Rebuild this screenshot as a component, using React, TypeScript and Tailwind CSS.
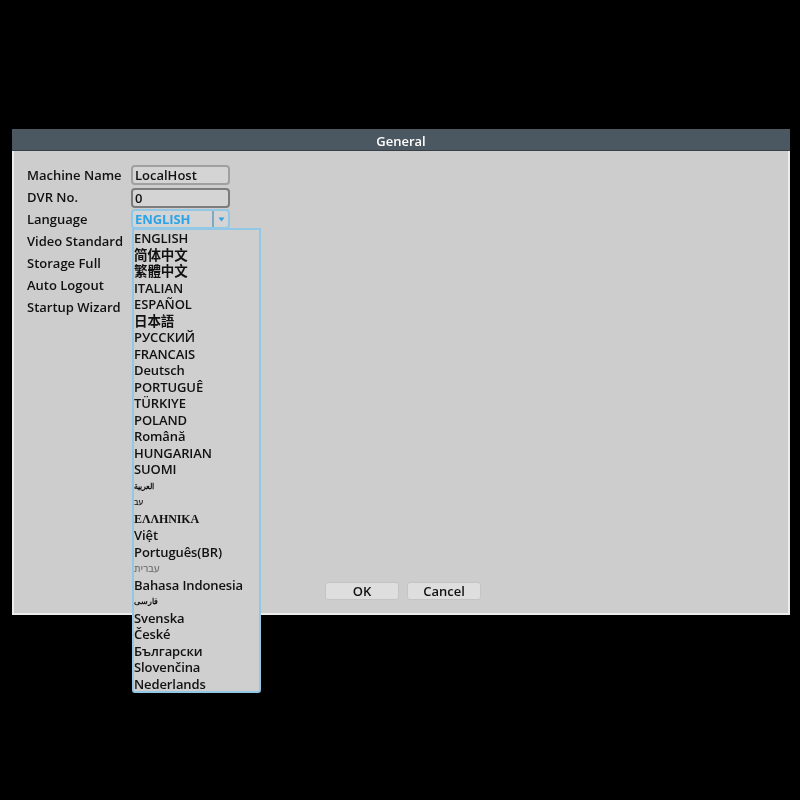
const font = { fontFamily: '"Open Sans", "Noto Sans CJK SC", sans-serif' };

const labels = [
  "Machine Name",
  "DVR No.",
  "Language",
  "Video Standard",
  "Storage Full",
  "Auto Logout",
  "Startup Wizard",
];

const languages: { name: string; cls?: string }[] = [
  { name: "ENGLISH" },
  { name: "简体中文", cls: "text-[13.5px]" },
  { name: "繁體中文", cls: "text-[13.5px]" },
  { name: "ITALIAN" },
  { name: "ESPAÑOL" },
  { name: "日本語", cls: "text-[13.5px]" },
  { name: "РУССКИЙ" },
  { name: "FRANCAIS" },
  { name: "Deutsch" },
  { name: "PORTUGUÊ" },
  { name: "TÜRKIYE" },
  { name: "POLAND" },
  { name: "Română" },
  { name: "HUNGARIAN" },
  { name: "SUOMI" },
  { name: "العربية", cls: "text-[8px]" },
  { name: "עב", cls: "text-[8px]" },
  { name: "ΕΛΛΗΝΙΚΑ", cls: "text-[12px] [font-family:'Liberation_Serif',serif] font-bold" },
  { name: "Việt" },
  { name: "Português(BR)" },
  { name: "עברית", cls: "text-[10px] font-normal text-[#777]" },
  { name: "Bahasa Indonesia" },
  { name: "فارسی", cls: "text-[8px]" },
  { name: "Svenska" },
  { name: "České" },
  { name: "Български" },
  { name: "Slovenčina" },
  { name: "Nederlands" },
];

function LanguageList() {
  return (
    <div className="absolute left-[118px] top-[99px] w-[129px] h-[465px] bg-[#cfcfcf] border-2 border-[#92c8e6] rounded-b-[3px]">
      {languages.map((l) => (
        <div
          key={l.name}
          className={`h-[16.5px] leading-[16.5px] whitespace-nowrap text-[#111] font-semibold tracking-[-0.1px] ${l.cls ?? "text-[13px]"}`}
        >
          {l.name}
        </div>
      ))}
    </div>
  );
}

export default function App() {
  return (
    <div
      className="h-[800px] bg-black pt-[129px] pl-[12px] pr-[10px] blur-[0.4px] antialiased"
      style={font}
    >
      <div className="relative h-[486px] flex flex-col bg-[#cdcdcd] border-b-[2px] border-x-[2px] border-[#ececec]">
        <div className="-mx-[2px] h-[22px] bg-[#4b5761] border-b border-[#36404a] text-center text-white text-[13px] font-semibold leading-[25px]">
          General
        </div>
        <div className="flex-1 flex flex-col pl-[13px] pt-[13px]">
          <div className="flex">
            <div className="w-[104px] flex flex-col">
              {labels.map((label) => (
                <div key={label} className="h-[22px] leading-[22px] text-[13px] font-semibold text-[#111] whitespace-nowrap">
                  {label}
                </div>
              ))}
            </div>
            <div className="w-[99px] flex flex-col pt-[1px]">
              <div className="h-[20px] mb-[3px] rounded-[4px] border-2 border-[#a0a0a0] bg-[#d4d4d4] pl-[2px] leading-[17px] text-[13px] font-semibold text-[#111]">
                LocalHost
              </div>
              <div className="h-[20px] mb-[1px] rounded-[4px] border-2 border-[#7c7c7c] bg-[#d4d4d4] pl-[2px] leading-[17px] text-[13px] font-semibold text-[#111]">
                0
              </div>
              <div className="h-[20px] rounded-[4px] border-2 border-[#92c8e6] bg-[#d4d4d4] flex text-[13px] font-bold text-[#2ba3e6]">
                <div className="flex-1 pl-[2px] leading-[17px] tracking-[-0.1px]">ENGLISH</div>
                <div className="w-[16px] border-l-2 border-[#7fa9c2] flex items-center justify-center">
                  <svg width="7" height="5" viewBox="0 0 7 5">
                    <path d="M0.5 0.5H6.5L3.5 4.5Z" fill="#2ba3e6" />
                  </svg>
                </div>
              </div>
            </div>
          </div>
          <div className="mt-auto mb-[13px] ml-[298px] flex gap-[8px]">
            <div className="w-[74px] h-[18px] rounded-[3px] bg-[#dedede] border border-[#c4c4c4] text-center leading-[17px] text-[13px] font-semibold text-[#111]">
              OK
            </div>
            <div className="w-[74px] h-[18px] rounded-[3px] bg-[#dedede] border border-[#c4c4c4] text-center leading-[17px] text-[13px] font-semibold text-[#111]">
              Cancel
            </div>
          </div>
        </div>
        <LanguageList />
      </div>
    </div>
  );
}
